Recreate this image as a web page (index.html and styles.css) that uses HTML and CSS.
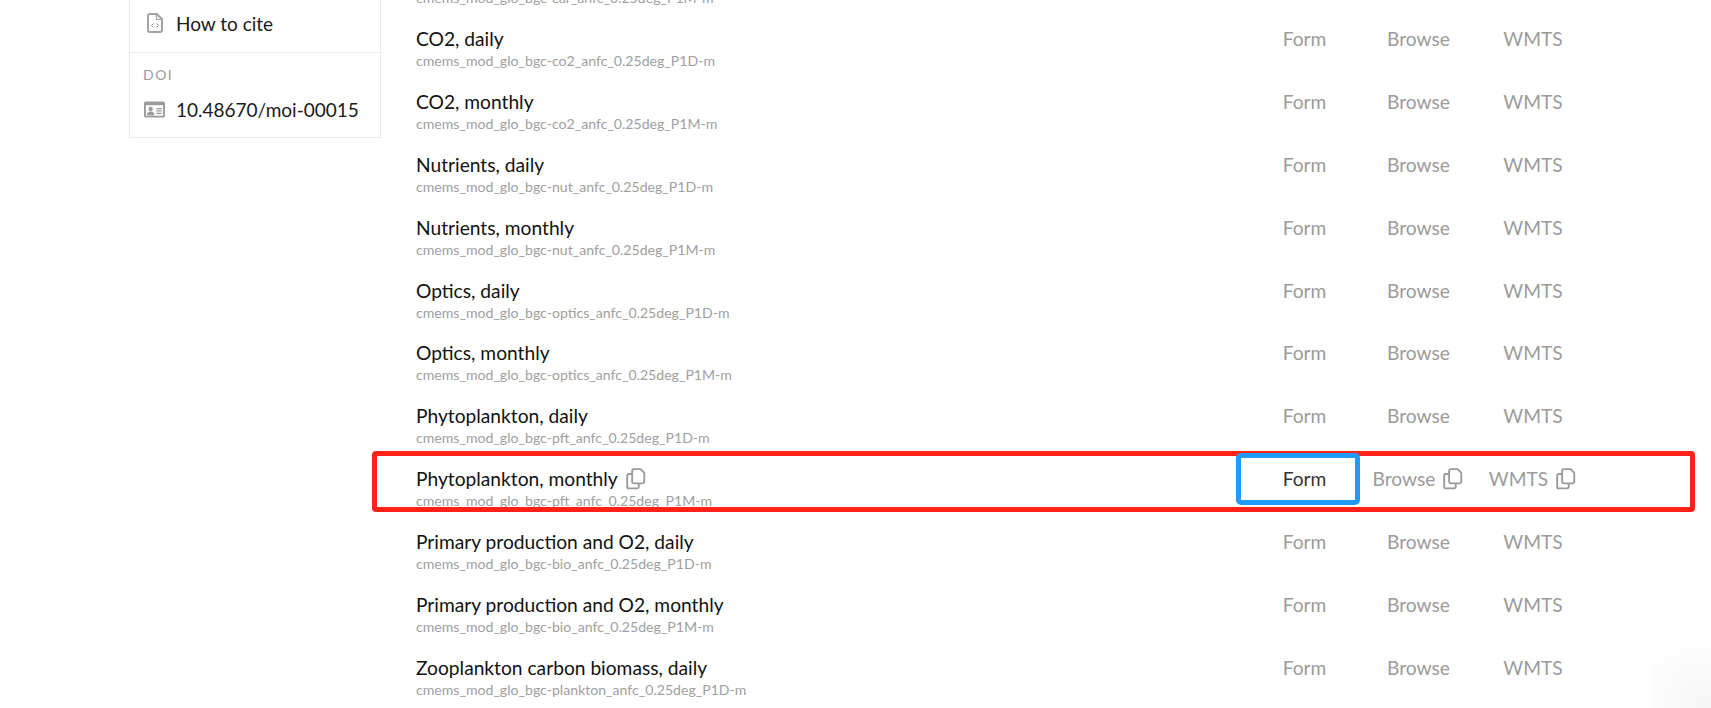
FILE: index.html
```html
<!DOCTYPE html>
<html lang="en">
<head>
    <meta charset="UTF-8">
    <meta name="viewport" content="width=device-width, initial-scale=1.0">
    <title>Product datasets</title>
    <link rel="stylesheet" href="styles.css">
</head>
<body>
    <svg class="icon-defs" width="0" height="0">
        <symbol id="copy" viewBox="0 0 20 20">
            <path d="M8 1h6.200L17.500 4.300v8.200a1.500 1.500 0 0 1-1.500 1.500H8a1.500 1.500 0 0 1-1.500-1.500V2.500A1.500 1.500 0 0 1 8 1z" fill="none" stroke="currentColor" stroke-width="1.700" stroke-linejoin="round"/>
            <path d="M6.500 5.500H3.500A1.500 1.500 0 0 0 2 7v10a1.500 1.500 0 0 0 1.500 1.500H11a1.500 1.500 0 0 0 1.500-1.500v-3" fill="none" stroke="currentColor" stroke-width="1.700" stroke-linejoin="round"/>
        </symbol>
    </svg>

    <div class="page">
        <aside class="sidebar">
            <div class="side-box">
                <div class="side-item">
                    <svg class="cite-icon" viewBox="0 0 16 20">
                        <path d="M3 1h6.800L15 6.200V17a2 2 0 0 1-2 2H3a2 2 0 0 1-2-2V3a2 2 0 0 1 2-2z" fill="none" stroke="#a3a3a3" stroke-width="2"/>
                        <path d="M9.500 1v5.500H15" fill="none" stroke="#a3a3a3" stroke-width="1.200"/>
                        <path d="M6.500 10.500l-2 2 2 2M9.500 10.500l2 2-2 2" fill="none" stroke="#8f8f8f" stroke-width="1"/>
                    </svg>
                    <span>How to cite</span>
                </div>
                <div class="side-doi">
                    <div class="doi-label">DOI</div>
                    <div class="side-item doi-value">
                        <svg class="doi-icon" viewBox="0 0 22 17">
                            <path d="M2 0h18a2 2 0 0 1 2 2v13a2 2 0 0 1-2 2H2a2 2 0 0 1-2-2V2a2 2 0 0 1 2-2z" fill="#9b9b9b"/>
                            <rect x="2" y="4" width="18" height="11" fill="#fff"/>
                            <circle cx="7" cy="8" r="2.300" fill="#9b9b9b"/>
                            <path d="M3 14.500c0-2.500 1.700-3.800 4-3.800s4 1.300 4 3.800z" fill="#9b9b9b"/>
                            <path d="M13 7.500h5.500M13 10h5.500M13 12.500h5.500" stroke="#9b9b9b" stroke-width="1.400"/>
                        </svg>
                        <span>10.48670/moi-00015</span>
                    </div>
                </div>
            </div>
        </aside>

        <main class="datasets">
            <div class="row">
                <div class="name"><div class="title">Carbon, monthly</div><div class="code">cmems_mod_glo_bgc-car_anfc_0.25deg_P1M-m</div></div>
                <a class="act">Form</a><a class="act">Browse</a><a class="act">WMTS</a>
            </div>
            <div class="row">
                <div class="name"><div class="title">CO2, daily</div><div class="code">cmems_mod_glo_bgc-co2_anfc_0.25deg_P1D-m</div></div>
                <a class="act">Form</a><a class="act">Browse</a><a class="act">WMTS</a>
            </div>
            <div class="row">
                <div class="name"><div class="title">CO2, monthly</div><div class="code">cmems_mod_glo_bgc-co2_anfc_0.25deg_P1M-m</div></div>
                <a class="act">Form</a><a class="act">Browse</a><a class="act">WMTS</a>
            </div>
            <div class="row">
                <div class="name"><div class="title">Nutrients, daily</div><div class="code">cmems_mod_glo_bgc-nut_anfc_0.25deg_P1D-m</div></div>
                <a class="act">Form</a><a class="act">Browse</a><a class="act">WMTS</a>
            </div>
            <div class="row">
                <div class="name"><div class="title">Nutrients, monthly</div><div class="code">cmems_mod_glo_bgc-nut_anfc_0.25deg_P1M-m</div></div>
                <a class="act">Form</a><a class="act">Browse</a><a class="act">WMTS</a>
            </div>
            <div class="row">
                <div class="name"><div class="title">Optics, daily</div><div class="code">cmems_mod_glo_bgc-optics_anfc_0.25deg_P1D-m</div></div>
                <a class="act">Form</a><a class="act">Browse</a><a class="act">WMTS</a>
            </div>
            <div class="row">
                <div class="name"><div class="title">Optics, monthly</div><div class="code">cmems_mod_glo_bgc-optics_anfc_0.25deg_P1M-m</div></div>
                <a class="act">Form</a><a class="act">Browse</a><a class="act">WMTS</a>
            </div>
            <div class="row">
                <div class="name"><div class="title">Phytoplankton, daily</div><div class="code">cmems_mod_glo_bgc-pft_anfc_0.25deg_P1D-m</div></div>
                <a class="act">Form</a><a class="act">Browse</a><a class="act">WMTS</a>
            </div>
            <div class="row row-hover">
                <div class="name">
                    <div class="title">Phytoplankton, monthly <svg class="copy copy-title"><use href="#copy"/></svg></div>
                    <div class="code">cmems_mod_glo_bgc-pft_anfc_0.25deg_P1M-m</div>
                </div>
                <a class="act act-active">Form</a>
                <a class="act">Browse <svg class="copy"><use href="#copy"/></svg></a>
                <a class="act">WMTS <svg class="copy"><use href="#copy"/></svg></a>
                <div class="mark-red"></div>
                <div class="mark-blue"></div>
            </div>
            <div class="row">
                <div class="name"><div class="title">Primary production and O2, daily</div><div class="code">cmems_mod_glo_bgc-bio_anfc_0.25deg_P1D-m</div></div>
                <a class="act">Form</a><a class="act">Browse</a><a class="act">WMTS</a>
            </div>
            <div class="row">
                <div class="name"><div class="title">Primary production and O2, monthly</div><div class="code">cmems_mod_glo_bgc-bio_anfc_0.25deg_P1M-m</div></div>
                <a class="act">Form</a><a class="act">Browse</a><a class="act">WMTS</a>
            </div>
            <div class="row">
                <div class="name"><div class="title">Zooplankton carbon biomass, daily</div><div class="code">cmems_mod_glo_bgc-plankton_anfc_0.25deg_P1D-m</div></div>
                <a class="act">Form</a><a class="act">Browse</a><a class="act">WMTS</a>
            </div>
        </main>
    </div>
    <div class="corner-shade"></div>
</body>
</html>
```

FILE: styles.css
```css
html, body {
    margin: 0;
    height: 100%;
    overflow: hidden;
    background-color: #fff;
}
body {
    font-family: Lato, 'Liberation Sans', sans-serif;
    color: #111;
}
.icon-defs {
    display: block;
    height: 0;
}
.page {
    display: flex;
    padding-left: 129px;
}
.sidebar {
    width: 252px;
    flex: none;
}
.side-box {
    margin-top: -10px;
    border: 1px solid #ebebf0;
    border-top: none;
    background-color: #fff;
    height: 148px;
    box-sizing: border-box;
}
.side-item {
    display: flex;
    align-items: center;
    font-size: 19px;
    color: #1a1a1a;
}
.side-box > .side-item {
    height: 62px;
    padding-top: 4px;
    box-sizing: border-box;
    padding-left: 17px;
}
.cite-icon {
    width: 16px;
    height: 20px;
    margin-right: 13px;
}
.side-doi {
    border-top: 1px solid #ebebf0;
    padding: 13px 0 0 13px;
}
.doi-label {
    font-size: 14px;
    letter-spacing: 1.5px;
    line-height: 17px;
    color: #9b9b9b;
}
.doi-value {
    margin-top: 15px;
    padding-left: 1px;
}
.doi-icon {
    width: 21px;
    height: 17px;
    margin-right: 11px;
}

.datasets {
    flex: none;
    width: 1175px;
    margin-left: 35px;
    margin-top: -46px;
}
.row {
    position: relative;
    display: grid;
    grid-template-columns: 1fr 115px 113px 116px;
    align-items: center;
    height: 62.85px;
}
.title {
    font-size: 19.2px;
    line-height: 24px;
    color: #111;
    display: flex;
    align-items: center;
}
.code {
    font-size: 14.1px;
    line-height: 16px;
    margin-top: 2px;
    color: #a0a0a0;
}
.act {
    display: flex;
    align-items: center;
    justify-content: center;
    gap: 7px;
    font-size: 19.2px;
    color: #9b9b9b;
    margin-top: -19px;
}
.act-active {
    color: #333;
}
.copy {
    width: 22px;
    height: 22px;
    color: #9b9b9b;
}
.copy-title {
    margin-left: 7px;
}
.mark-red {
    position: absolute;
    left: -44px;
    right: -104px;
    top: -6px;
    height: 61px;
    box-sizing: border-box;
    border: 5px solid #ff2117;
    border-radius: 4px;
}
.mark-blue {
    position: absolute;
    left: 820px;
    width: 124px;
    top: -4px;
    height: 52px;
    box-sizing: border-box;
    border: 5px solid #1f9bff;
    border-radius: 5px;
}
.corner-shade {
    position: fixed;
    right: 0;
    bottom: 0;
    width: 60px;
    height: 60px;
    background: radial-gradient(circle at 100% 100%, #f6f6f6 0, #fff 100%);
}
```
